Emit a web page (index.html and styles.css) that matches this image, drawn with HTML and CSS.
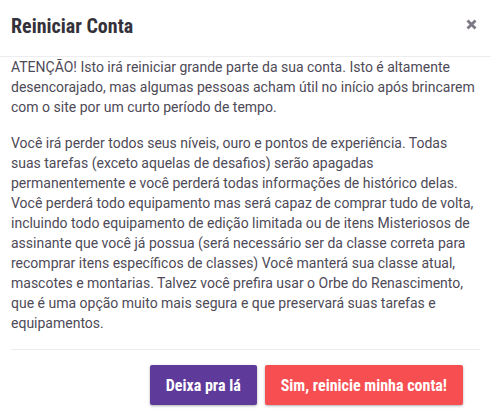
FILE: index.html
```html
<!DOCTYPE html>
<html lang="pt">
<head>
<meta charset="utf-8">
<title>Reiniciar Conta</title>
<link rel="stylesheet" href="styles.css">
</head>
<body>
<div class="modal">
  <div class="modal-header">
    <h2 class="modal-title">Reiniciar Conta</h2>
    <button class="close" aria-label="Fechar">
      <svg width="11" height="11" viewBox="0 0 11 11"><path d="M1.5 1.5 L9.5 9.5 M9.5 1.5 L1.5 9.5" stroke="#7d7786" stroke-width="2.8" stroke-linecap="butt"/></svg>
    </button>
  </div>
  <div class="modal-body">
    <p>ATENÇÃO! Isto irá reiniciar grande parte da sua conta. Isto é altamente desencorajado, mas algumas pessoas acham útil no início após brincarem com o site por um curto período de tempo.</p>
    <p>Você irá perder todos seus níveis, ouro e pontos de experiência. Todas suas tarefas (exceto aquelas de desafios) serão apagadas permanentemente e você perderá todas informações de histórico delas. Você perderá todo equipamento mas será capaz de comprar tudo de volta, incluindo todo equipamento de edição limitada ou de itens Misteriosos de assinante que você já possua (será necessário ser da classe correta para recomprar itens específicos de classes) Você manterá sua classe atual, mascotes e montarias. Talvez você prefira usar o Orbe do Renascimento, que é uma opção muito mais segura e que preservará suas tarefas e equipamentos.</p>
  </div>
  <div class="modal-footer">
    <button class="btn btn-primary">Deixa pra lá</button>
    <button class="btn btn-danger">Sim, reinicie minha conta!</button>
  </div>
</div>
</body>
</html>
```
FILE: styles.css
```css
html, body {
  margin: 0;
  padding: 0;
  background: #ffffff;
}
body {
  font-family: Roboto, "Noto Sans", sans-serif;
  color: #4e4a57;
}
.modal {
  width: 491px;
}
.modal-header {
  display: flex;
  justify-content: space-between;
  align-items: flex-start;
  padding: 14px 11px 18px 11px;
  border-bottom: 1px solid #edecee;
}
.modal-title {
  margin: 0;
  font-family: "Roboto Condensed", "Liberation Sans Narrow", Roboto, sans-serif;
  font-stretch: condensed;
  font-weight: 700;
  font-size: 20px;
  line-height: 24px;
  color: #34313a;
}
.close {
  border: 0;
  background: none;
  padding: 0;
  margin: 5px 3px 0 0;
  width: 11px;
  height: 11px;
  display: block;
}
.close svg { display: block; }
.modal-body {
  padding: 0 11px;
}
.modal-body p {
  margin: 0 0 16px 0;
  font-size: 14px;
  line-height: 20px;
}
.modal-footer {
  margin: 0 11px;
  border-top: 1px solid #edecee;
  padding: 15px 15px 10px 0;
  display: flex;
  justify-content: flex-end;
  gap: 8px;
}
.btn {
  border: 0;
  border-radius: 2px;
  height: 40px;
  padding: 0 16px;
  font-family: "Roboto Condensed", "Liberation Sans Narrow", Roboto, sans-serif;
  font-stretch: condensed;
  font-weight: 700;
  font-size: 16px;
  color: #ffffff;
  box-shadow: 0 1px 3px rgba(26, 24, 29, 0.24), 0 1px 2px rgba(26, 24, 29, 0.12);
}
.btn-primary { background: #5e3b9b; }
.btn-danger { background: #f74e52; margin-right: 2px; }
```
